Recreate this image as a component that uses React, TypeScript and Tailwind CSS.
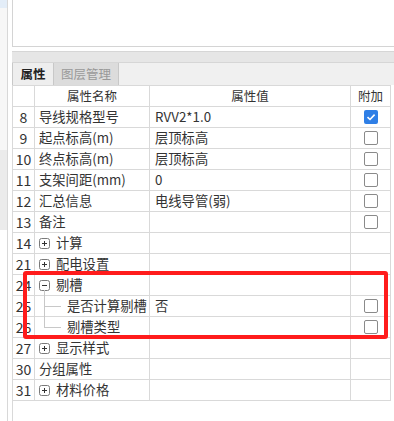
import React from "react";

type Kind = "plain" | "plus" | "minus" | "childMid" | "childLast";
type Row = { n: string; name: string; val?: string; cb?: "on" | "off"; kind: Kind };

const rows: Row[] = [
  { n: "8", name: "导线规格型号", val: "RVV2*1.0", cb: "on", kind: "plain" },
  { n: "9", name: "起点标高(m)", val: "层顶标高", cb: "off", kind: "plain" },
  { n: "10", name: "终点标高(m)", val: "层顶标高", cb: "off", kind: "plain" },
  { n: "11", name: "支架间距(mm)", val: "0", cb: "off", kind: "plain" },
  { n: "12", name: "汇总信息", val: "电线导管(弱)", cb: "off", kind: "plain" },
  { n: "13", name: "备注", cb: "off", kind: "plain" },
  { n: "14", name: "计算", kind: "plus" },
  { n: "21", name: "配电设置", kind: "plus" },
  { n: "24", name: "剔槽", kind: "minus" },
  { n: "25", name: "是否计算剔槽", val: "否", cb: "off", kind: "childMid" },
  { n: "26", name: "剔槽类型", cb: "off", kind: "childLast" },
  { n: "27", name: "显示样式", kind: "plus" },
  { n: "30", name: "分组属性", kind: "plain" },
  { n: "31", name: "材料价格", kind: "plus" },
];

function ExpandBox({ minus }: { minus?: boolean }) {
  return (
    <svg width="11" height="11" viewBox="0 0 11 11" className="shrink-0">
      <rect x="0.5" y="0.5" width="10" height="10" rx="2" fill="white" stroke="#7a7a7a" />
      <line x1="3" y1="5.5" x2="8" y2="5.5" stroke="#333" strokeWidth="1" />
      {!minus && <line x1="5.5" y1="3" x2="5.5" y2="8" stroke="#333" strokeWidth="1" />}
    </svg>
  );
}

function Check({ on }: { on: boolean }) {
  if (on)
    return (
      <div className="w-[14px] h-[14px] rounded-[2px] bg-[#2f7fe6] flex items-center justify-center">
        <svg width="10" height="10" viewBox="0 0 10 10">
          <path d="M1.5 5.2 L4 7.5 L8.6 2.6" fill="none" stroke="white" strokeWidth="1.6" />
        </svg>
      </div>
    );
  return <div className="w-[14px] h-[14px] rounded-[2px] border border-[#8a8a8a] bg-white" />;
}

function NameCell({ r }: { r: Row }) {
  if (r.kind === "plus" || r.kind === "minus") {
    return (
      <div className="relative h-full flex items-center pl-[4px]">
        <ExpandBox minus={r.kind === "minus"} />
        <span className="ml-[6px]">{r.name}</span>
        {r.kind === "minus" && (
          <span className="absolute left-[9px] top-[15px] bottom-[-1px] w-px bg-[#c8c8c8]" />
        )}
      </div>
    );
  }
  if (r.kind === "childMid" || r.kind === "childLast") {
    return (
      <div className="relative h-full flex items-center pl-[32px]">
        <span
          className={
            r.kind === "childMid"
              ? "absolute left-[9px] top-0 bottom-[-1px] w-px bg-[#c8c8c8]"
              : "absolute left-[9px] top-0 h-[10px] w-px bg-[#c8c8c8]"
          }
        />
        <span className="absolute left-[9px] top-[10px] w-[17px] h-px bg-[#c8c8c8]" />
        <span>{r.name}</span>
      </div>
    );
  }
  return <div className="h-full flex items-center pl-[4px]">{r.name}</div>;
}

export default function App() {
  return (
    <div
      className="relative w-[394px] h-[421px] bg-white flex overflow-hidden text-[#333]"
      style={{ fontFamily: '"Noto Sans CJK SC", "Noto Sans", sans-serif' }}
    >
      {/* left background strip */}
      <div className="w-[7px] flex flex-col">
        <div className="h-[8px] bg-[#e3edf8]" />
        <div className="h-[142px] bg-[#f7f7f7]" />
        <div className="h-[80px] bg-[#ebebeb]" />
        <div className="flex-1 bg-white" />
      </div>
      <div className="w-px bg-[#d8d8d8]" />
      <div className="w-[4px]" />

      {/* main column */}
      <div className="flex-1 flex flex-col">
        <div className="h-[47px] border-l border-b border-[#d4d4d4] bg-white" />
        <div className="h-[4px]" />
        <div className="h-[11px] bg-[#e6e6e6] border-t border-[#d6d6d6]" />
        <div className="h-[23px] bg-[#f0f0f0] border-t border-[#d6d6d6] flex">
          <div className="w-[42px] h-full border-l border-r border-[#c8c8c8] bg-[#eeeeee] flex items-center justify-center text-[12.5px] font-bold text-[#222]">
            属性
          </div>
          <div className="w-[65px] h-full border-r border-[#c8c8c8] bg-[#dcdcdc] flex items-center justify-center text-[12.5px] text-[#999]">
            图层管理
          </div>
        </div>

        <div className="flex-1 border-l border-[#d9d9d9]">
          <div className="w-[378px] border-t border-[#d9d9d9] grid grid-cols-[22px_115px_201px_40px] text-[13.3px]">
            <div className="h-[21px] border-r border-b border-[#d9d9d9]" />
            <div className="h-[21px] border-r border-b border-[#d9d9d9] flex items-center justify-center text-[12.5px]">
              属性名称
            </div>
            <div className="h-[21px] border-r border-b border-[#d9d9d9] flex items-center justify-center text-[12.5px]">
              属性值
            </div>
            <div className="h-[21px] border-r border-b border-[#d9d9d9] flex items-center justify-center text-[12.5px]">
              附加
            </div>

            {rows.map((r, i) => (
              <React.Fragment key={i}>
                <div className="h-[21px] border-r border-b border-[#d9d9d9] flex items-center justify-center text-[14px]">
                  {r.n}
                </div>
                <div className="h-[21px] border-r border-b border-[#d9d9d9] whitespace-nowrap">
                  <NameCell r={r} />
                </div>
                <div className="h-[21px] border-r border-b border-[#d9d9d9] flex items-center pl-[5px] whitespace-nowrap">
                  {r.val ?? ""}
                </div>
                <div className="h-[21px] border-r border-b border-[#d9d9d9] flex items-center justify-center">
                  {r.cb && <Check on={r.cb === "on"} />}
                </div>
              </React.Fragment>
            ))}
          </div>
        </div>
      </div>

      {/* red highlight annotation */}
      <div className="absolute left-[23px] top-[271px] w-[365px] h-[68px] border-[4px] border-[#ff1c1c] rounded-[3px] pointer-events-none" />
    </div>
  );
}
